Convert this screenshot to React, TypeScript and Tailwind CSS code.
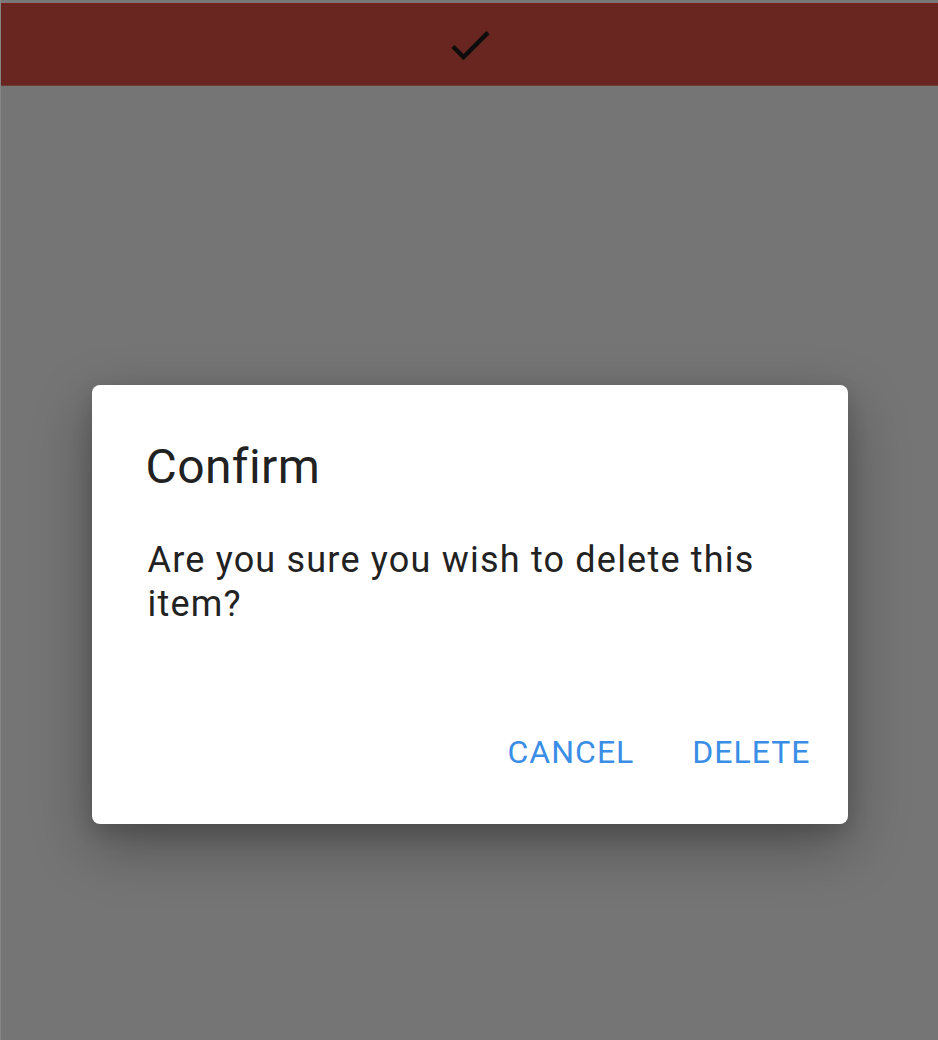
export default function App() {
  return (
    <div
      className="h-screen w-full flex flex-col bg-[#757575] border-l border-[#858585]"
      style={{ fontFamily: "Roboto, 'Noto Sans', sans-serif" }}
    >
      {/* status strip */}
      <div className="h-[3px] bg-[#787878]" />

      {/* app bar under the barrier */}
      <div className="h-[83px] bg-[#692520] border-t border-[#7a2016] border-b border-b-[#6d3a35] flex items-center justify-center">
        <svg width="52" height="52" viewBox="0 0 24 24" fill="#0d0d0d">
          <path d="M9 16.17L4.83 12l-1.42 1.41L9 19 21 7l-1.41-1.41z" />
        </svg>
      </div>

      {/* dialog */}
      <div className="flex-1 pt-[299px]">
        <div className="mx-auto w-[756px] bg-white rounded-[8px] shadow-[0_22px_60px_rgba(0,0,0,0.32),0_8px_20px_rgba(0,0,0,0.14)] pt-[54px] pb-[52px]">
          <h2 className="px-[54px] text-[48px] leading-[56px] text-[#212121] tracking-[0.4px]">
            Confirm
          </h2>
          <p className="mt-[43px] px-[56px] text-[36px] leading-[44px] text-[#222] tracking-[1.2px]">
            Are you sure you wish to delete this item?
          </p>
          <div className="mt-[106px] flex justify-end gap-[58px] pr-[37px]">
            <button className="text-[32px] leading-[40px] tracking-[1px] text-[#3a8ee6]">
              CANCEL
            </button>
            <button className="text-[32px] leading-[40px] tracking-[1px] text-[#3a8ee6]">
              DELETE
            </button>
          </div>
        </div>
      </div>
    </div>
  )
}
